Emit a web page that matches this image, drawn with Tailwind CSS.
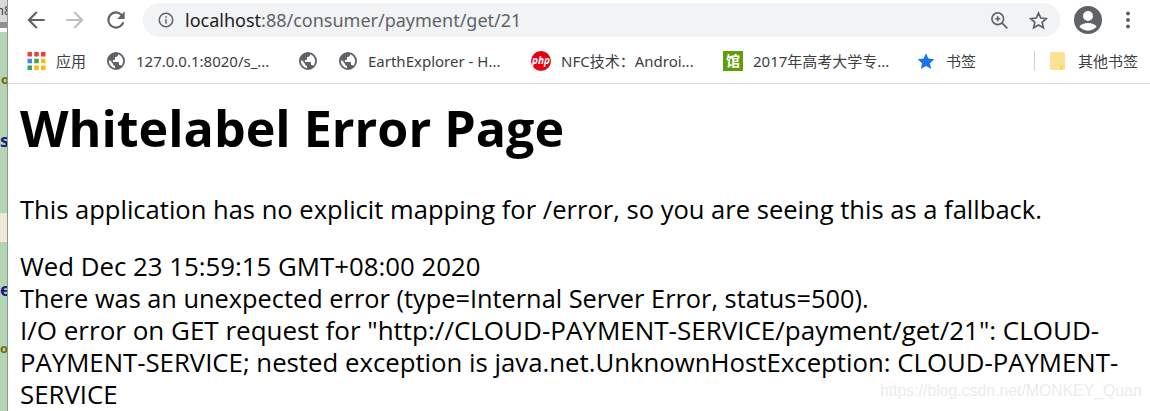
<!DOCTYPE html>
<html lang="en">
<head>
<meta charset="UTF-8">
<title>Whitelabel Error Page</title>
<script src="https://cdn.jsdelivr.net/npm/@tailwindcss/browser@4"></script>
</head>
<body class="bg-white overflow-hidden">
<div class="relative flex w-[1150px] h-[411px] overflow-hidden font-['Noto_Sans','Noto_Sans_CJK_SC',sans-serif]">

  <!-- sliver of the window behind -->
  <div class="w-[8px] h-full shrink-0 flex flex-col border-r border-[#8a9a8c] overflow-hidden text-[13px] font-bold leading-none">
    <div class="h-[22px] bg-[#d9d9d9] text-[#444] font-normal pt-[4px] whitespace-nowrap -ml-[4px]">h8</div>
    <div class="h-[6px] bg-[#8f8f8f]"></div>
    <div class="h-[4px] bg-white"></div>
    <div class="h-[88px] bg-[#b4d5b4] pt-[41px] pl-[1px] text-[#6b6b10]">o</div>
    <div class="h-[93px] bg-[#b4d5b4] pt-[11px] text-[#1a1a80] text-[18px]">s</div>
    <div class="h-[29px] bg-[#efe9d8]"></div>
    <div class="h-[100px] bg-[#b4d5b4] pt-[38px] text-[#1a1a80] text-[18px]">e</div>
    <div class="flex-1 bg-[#b4d5b4] text-[#6b6b10]">o</div>
  </div>

  <div class="flex-1 min-w-0 flex flex-col">
    <!-- toolbar -->
    <div class="h-[40px] flex items-center text-[#5f6368]">
      <div class="w-[135px] flex items-center pl-[15px]">
        <svg class="w-[26px] h-[26px]" viewBox="0 0 24 24" fill="currentColor"><path d="M20 11H7.800l5.600-5.600L12 4l-8 8 8 8 1.400-1.400L7.800 13H20z"/></svg>
        <svg class="w-[26px] h-[26px] ml-[13px] text-[#bdc1c6]" viewBox="0 0 24 24" fill="currentColor"><path d="M4 11h12.200l-5.600-5.600L12 4l8 8-8 8-1.400-1.400 5.600-5.600H4z"/></svg>
        <svg class="w-[26px] h-[26px] ml-[15px]" viewBox="0 0 24 24" fill="currentColor"><path d="M17.650 6.350A7.960 7.960 0 0 0 12 4a8 8 0 1 0 7.730 10h-2.080A6 6 0 1 1 12 6c1.660 0 3.140.69 4.220 1.780L13 11h7V4z"/></svg>
      </div>
      <div class="w-[917px] h-[34px] rounded-full bg-[#f1f3f4] flex items-center pl-[14px] pr-[10px]">
        <svg class="w-[18px] h-[18px] shrink-0" viewBox="0 0 24 24" fill="none" stroke="currentColor" stroke-width="2"><circle cx="12" cy="12" r="9"/><path d="M12 11v6M12 7v2"/></svg>
        <div class="ml-[10px] flex-1 text-[18px] leading-none whitespace-nowrap text-[#5f6368]"><span class="text-[#202124]">localhost</span>:88/consumer/payment/get/21</div>
        <svg class="w-[20px] h-[20px]" viewBox="0 0 24 24" fill="none" stroke="currentColor" stroke-width="2"><circle cx="10.500" cy="10.500" r="7"/><path d="M15.500 15.500 22 22M10.500 7.500v6M7.500 10.500h6"/></svg>
        <svg class="w-[21px] h-[21px] ml-[19px] mr-[1px]" viewBox="0 0 24 24" fill="none" stroke="currentColor" stroke-width="2"><path d="m12 3.500 2.600 5.700 6.200.7-4.600 4.200 1.300 6.100L12 17.100l-5.500 3.100 1.300-6.100-4.600-4.200 6.200-.7z"/></svg>
      </div>
      <svg class="w-[28px] h-[28px] ml-[14px] shrink-0" viewBox="0 0 28 28" fill="currentColor"><path fill-rule="evenodd" d="M14 0a14 14 0 1 1 0 28 14 14 0 0 1 0-28Zm0 5a5 5 0 1 0 0 10 5 5 0 0 0 0-10Zm0 12c-3.600 0-7.300 1.300-8.600 3.400a10.800 10.800 0 0 0 17.200 0C21.300 18.300 17.600 17 14 17Z"/></svg>
      <svg class="w-[6px] h-[20px] ml-[23px] shrink-0" viewBox="0 0 6 20" fill="currentColor"><circle cx="3" cy="3.500" r="2"/><circle cx="3" cy="10" r="2"/><circle cx="3" cy="16.500" r="2"/></svg>
    </div>

    <!-- bookmarks -->
    <div class="h-[44px] shrink-0 flex items-center border-b border-[#dadce0] text-[15px] text-[#3c4043] whitespace-nowrap pb-[1px]">
      <div class="w-[91px] pl-[19px] flex items-center gap-[10px]">
        <svg class="w-[19px] h-[18px] shrink-0" viewBox="0 0 16 16">
          <rect x="0" y="0" width="4" height="4" fill="#ea4335"/><rect x="6" y="0" width="4" height="4" fill="#ea4335"/><rect x="12" y="0" width="4" height="4" fill="#ea4335"/>
          <rect x="0" y="6" width="4" height="4" fill="#4285f4"/><rect x="6" y="6" width="4" height="4" fill="#34a853"/><rect x="12" y="6" width="4" height="4" fill="#fbbc05"/>
          <rect x="0" y="12" width="4" height="4" fill="#34a853"/><rect x="6" y="12" width="4" height="4" fill="#fbbc05"/><rect x="12" y="12" width="4" height="4" fill="#fbbc05"/>
        </svg>
        <span>应用</span>
      </div>
      <div class="w-[200px] pl-[8px] flex items-center gap-[11px]">
        <svg class="w-[18px] h-[18px] shrink-0 text-[#5f6368]" viewBox="0 0 18 18" fill="currentColor"><path fill-rule="evenodd" d="M9 0a9 9 0 1 1 0 18A9 9 0 0 1 9 0ZM2 9c0 3.500 2.600 6.500 6 7v-2c-1 0-2-1-2-2L3 8Zm9-6.700V3c0 1-1 2-2 2H8v2c0 .5-.5 1-1 1H6v2h5c.5 0 1 .5 1 1v2h1c.5 0 1 .3 1.200.8A7 7 0 0 0 11 2.300Z"/></svg>
        <span>127.0.0.1:8020/s_...</span>
      </div>
      <div class="w-[40px] flex items-center">
        <svg class="w-[18px] h-[18px] shrink-0 text-[#5f6368]" viewBox="0 0 18 18" fill="currentColor"><path fill-rule="evenodd" d="M9 0a9 9 0 1 1 0 18A9 9 0 0 1 9 0ZM2 9c0 3.500 2.600 6.500 6 7v-2c-1 0-2-1-2-2L3 8Zm9-6.700V3c0 1-1 2-2 2H8v2c0 .5-.5 1-1 1H6v2h5c.5 0 1 .5 1 1v2h1c.5 0 1 .3 1.200.8A7 7 0 0 0 11 2.300Z"/></svg>
      </div>
      <div class="w-[192px] flex items-center gap-[11px]">
        <svg class="w-[18px] h-[18px] shrink-0 text-[#5f6368]" viewBox="0 0 18 18" fill="currentColor"><path fill-rule="evenodd" d="M9 0a9 9 0 1 1 0 18A9 9 0 0 1 9 0ZM2 9c0 3.500 2.600 6.500 6 7v-2c-1 0-2-1-2-2L3 8Zm9-6.700V3c0 1-1 2-2 2H8v2c0 .5-.5 1-1 1H6v2h5c.5 0 1 .5 1 1v2h1c.5 0 1 .3 1.200.8A7 7 0 0 0 11 2.300Z"/></svg>
        <span>EarthExplorer - H...</span>
      </div>
      <div class="w-[192px] flex items-center gap-[10px]">
        <div class="w-[20px] h-[20px] shrink-0 rounded-full bg-[#e60012] text-white text-[10px] italic font-bold leading-[18px] text-center">php</div>
        <span>NFC技术：Androi...</span>
      </div>
      <div class="w-[194px] flex items-center gap-[10px]">
        <div class="w-[20px] h-[20px] shrink-0 bg-[#5f9e0a] text-white text-[14px] font-bold leading-[20px] text-center">馆</div>
        <span>2017年高考大学专...</span>
      </div>
      <div class="w-[117px] flex items-center gap-[11px]">
        <svg class="w-[18px] h-[18px] shrink-0" viewBox="0 0 24 24" fill="#1a73e8"><path d="m12 1.500 3.200 7.300 7.900.8-5.900 5.300 1.700 7.800L12 18.700l-6.900 4 1.700-7.800L.9 9.600l7.900-.8z"/></svg>
        <span>书签</span>
      </div>
      <div class="h-[20px] w-px bg-[#cfd1d4] shrink-0"></div>
      <div class="pl-[15px] flex items-center gap-[13px]">
        <svg class="w-[15px] h-[18px] shrink-0" viewBox="0 0 15 18"><rect width="15" height="18" rx="1.500" fill="#fde293"/><path d="M11 18v-3.500h4" fill="none" stroke="#f9cf55" stroke-width="1.500"/></svg>
        <span>其他书签</span>
      </div>
    </div>

    <!-- error page -->
    <div class="pl-[12px] text-black whitespace-nowrap font-['Open_Sans','Noto_Sans',sans-serif]">
      <h1 class="text-[50.200px] font-bold leading-[70px] mt-[9px]">Whitelabel Error Page</h1>
      <p class="text-[25.550px] leading-[32px] mt-[30px]">This application has no explicit mapping for /error, so you are seeing this as a fallback.</p>
      <div class="leading-[32px] mt-[25px]">
        <div class="text-[25.800px]">Wed Dec 23 15:59:15 GMT+08:00 2020</div>
        <div class="text-[25.350px]">There was an unexpected error (type=Internal Server Error, status=500).</div>
        <div class="text-[26px]">I/O error on GET request for "http://CLOUD-PAYMENT-SERVICE/payment/get/21": CLOUD-</div>
        <div class="text-[25.750px]">PAYMENT-SERVICE; nested exception is java.net.UnknownHostException: CLOUD-PAYMENT-</div>
        <div class="text-[25.800px]">SERVICE</div>
      </div>
    </div>
  </div>

  <div class="absolute left-[880px] top-[380px] text-[15.800px] leading-[22px] text-[#ececec] font-['Liberation_Sans',sans-serif] whitespace-nowrap">https://blog.csdn.net/MONKEY_Quan</div>
</div>
</body>
</html>
